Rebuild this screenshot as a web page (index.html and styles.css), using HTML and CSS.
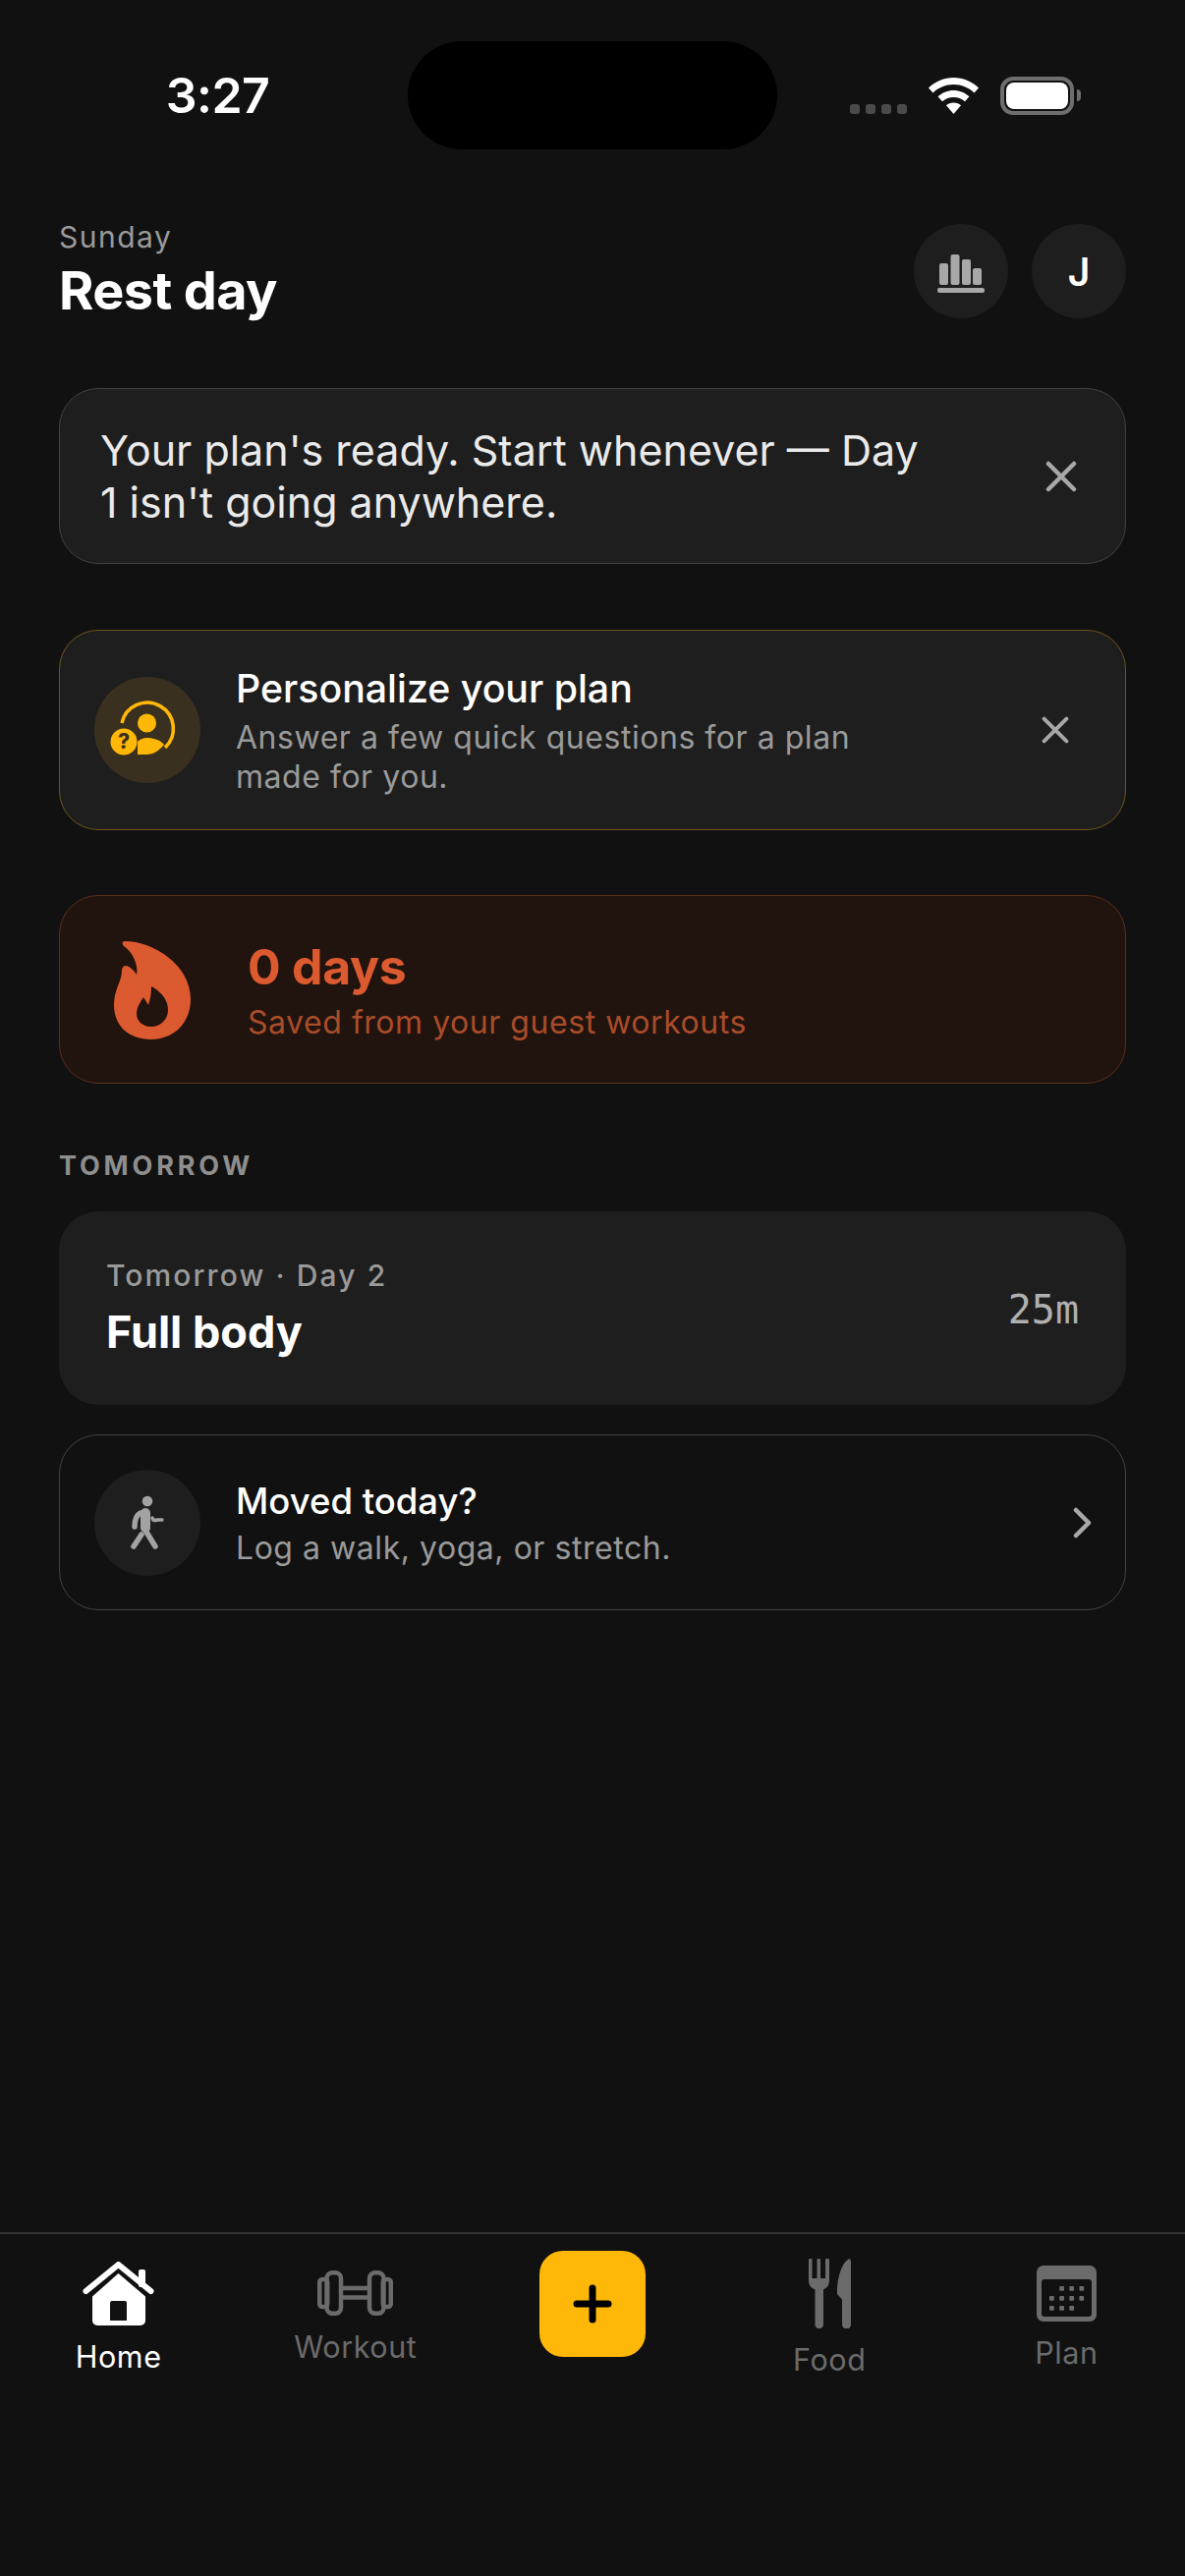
FILE: index.html
```html
<!DOCTYPE html>
<html lang="en">
<head>
<meta charset="utf-8">
<title>Home</title>
<link rel="stylesheet" href="styles.css">
</head>
<body>
<div class="screen">
  <div class="status">
    <div class="status-left"><span class="time">3:27</span></div>
    <div class="island"></div>
    <div class="status-right">
      <div class="signal"><i></i><i></i><i></i><i></i></div>
      <svg class="wifi" viewBox="0 0 51 37"><path d="M25.5 0C35 0 44 3.700 51 10.500L46.500 15.500C40.800 10 33.400 7 25.500 7C17.600 7 10.200 10 4.500 15.500L0 10.500C7 3.700 16 0 25.500 0Z"/><path d="M25.500 13C31.500 13 37.200 15.300 41.500 19.300L37 24.300C33.900 21.500 29.800 20 25.500 20C21.200 20 17.100 21.500 14 24.300L9.500 19.300C13.800 15.300 19.500 13 25.500 13Z"/><path d="M25.500 25.500C28.300 25.500 31 26.500 33 28.300L25.500 37L18 28.300C20 26.500 22.700 25.500 25.500 25.500Z"/></svg>
      <div class="battery"><div class="battery-fill"></div></div>
      <div class="battery-nub"></div>
    </div>
  </div>

  <main class="main">
    <header class="head">
      <div class="head-text">
        <div class="day">Sunday</div>
        <h1 class="title">Rest day</h1>
      </div>
      <div class="head-actions">
        <div class="round">
          <svg class="bars" viewBox="0 0 48 39"><rect x="2" y="9" width="9" height="22" rx="2"/><rect x="13.500" y="0" width="9" height="31" rx="2"/><rect x="25" y="5" width="9" height="26" rx="2"/><rect x="36" y="14" width="9" height="17" rx="2"/><rect x="0" y="34" width="48" height="5" rx="2"/></svg>
        </div>
        <div class="round round-j">J</div>
      </div>
    </header>

    <section class="card banner">
      <p class="banner-text">Your plan's ready. Start whenever — Day 1 isn't going anywhere.</p>
      <svg class="close close-a" viewBox="0 0 32 32"><path d="M3 3L29 29M29 3L3 29"/></svg>
    </section>

    <section class="card personal">
      <div class="disc disc-amber">
        <svg viewBox="0 0 108 108" class="disc-icon">
          <path class="p-arc" d="M28 47A26.500 26.500 0 1 1 72 72"/>
          <circle class="p-fill" cx="53.500" cy="47" r="9.500"/>
          <path class="p-fill" d="M44 79V66C47 63 50 62 53.500 62C60 62 67 64 71 69C66 75 60 79 53.500 79Z"/>
          <circle class="p-badge" cx="30" cy="66" r="13.500"/>
          <text class="p-q" x="30" y="73" text-anchor="middle">?</text>
        </svg>
      </div>
      <div class="text-col personal-text">
        <div class="row-title row-title-lg">Personalize your plan</div>
        <div class="row-sub">Answer a few quick questions for a plan made for you.</div>
      </div>
      <svg class="close close-b" viewBox="0 0 32 32"><path d="M3 3L29 29M29 3L3 29"/></svg>
    </section>

    <section class="card streak">
      <svg class="flame" viewBox="0 0 78 101"><path fill-rule="evenodd" d="M11 1C40 1 78 25 78 60C78 85 60 101 38 101C15 101 0 87 0 66C0 50 8 42 8 31C8 26 12 25 15 27C19 29 21 32 23 35C25 25 19 12 10 6C8 4 8 1 11 1ZM38 47C38 54 37 60 35 66L30 58C27 63 23 68 23 75C23 82 29 88 38 88C47 88 55 81 55 71C55 60 47 52 38 47Z"/></svg>
      <div class="streak-text">
        <div class="streak-num">0 days</div>
        <div class="streak-sub">Saved from your guest workouts</div>
      </div>
    </section>

    <div class="section-label">TOMORROW</div>

    <section class="next">
      <div class="next-text">
        <div class="next-over">Tomorrow · Day 2</div>
        <div class="next-title">Full body</div>
      </div>
      <div class="next-time">25m</div>
    </section>

    <section class="card moved">
      <div class="disc disc-grey">
        <svg viewBox="0 0 108 108" class="disc-icon walk">
          <circle cx="54" cy="32" r="5.300" class="w-fill"/>
          <path class="w-thick" d="M52 44V59"/>
          <path class="w-mid" d="M47 44C43 46 41 50 41 58"/>
          <path class="w-thin" d="M59 49L60 51Q61 52 64 51L69 51"/>
          <path class="w-mid" d="M51 60L62 78"/>
          <path class="w-mid" d="M48 66L40 78"/>
        </svg>
      </div>
      <div class="text-col moved-text">
        <div class="row-title row-title-sm">Moved today?</div>
        <div class="row-sub">Log a walk, yoga, or stretch.</div>
      </div>
      <svg class="chev" viewBox="0 0 20 32"><path d="M3 3L16 16L3 29"/></svg>
    </section>
  </main>

  <nav class="nav">
    <div class="tab tab-on">
      <svg class="ic-home" viewBox="0 0 73 65"><path class="home-roof" d="M3.500 30L36.500 3L69.500 30"/><rect x="57" y="8" width="7" height="18" rx="2" class="home-fill"/><path class="home-fill" fill-rule="evenodd" d="M36.500 12L64 35.500V60A5 5 0 0 1 59 65H15A5 5 0 0 1 10 60V35.500ZM30 40A2 2 0 0 0 28 42V60H45V42A2 2 0 0 0 43 40Z"/></svg>
      <span class="tab-label">Home</span>
    </div>
    <div class="tab">
      <svg class="ic-work" viewBox="0 0 77 46"><g class="work"><rect x="2.200" y="9" width="8" height="28" rx="3"/><rect x="9.500" y="2.200" width="14.500" height="41.600" rx="6"/><rect x="53" y="2.200" width="14.500" height="41.600" rx="6"/><rect x="66.800" y="9" width="8" height="28" rx="3"/><path d="M24 18H53M24 27.500H53"/></g></svg>
      <span class="tab-label">Workout</span>
    </div>
    <div class="tab-add"><svg class="plus" viewBox="0 0 40 40"><path d="M4 20H36M20 4V36"/></svg></div>
    <div class="tab">
      <svg class="ic-food" viewBox="0 0 43 71"><g class="solid"><path d="M0 1.500A1.500 1.500 0 0 1 3.500 1.500V20H8.500V1.500A1.750 1.750 0 0 1 12 1.500V20H17V1.500A2 2 0 0 1 21 1.500V22C21 27 18.500 30 15 31.500V67A4.250 4.250 0 0 1 6.500 67V31.500C2.500 30 0 27 0 22Z"/><path d="M43 3V67A4.500 4.500 0 0 1 34 67V41.500L29 36C28.500 22 33 5 40.500 0.500C42 0 43 1 43 3Z"/></g></svg>
      <span class="tab-label">Food</span>
    </div>
    <div class="tab">
      <svg class="ic-plan" viewBox="0 0 61 57"><path class="solid" fill-rule="evenodd" d="M7 0H54A7 7 0 0 1 61 7V50A7 7 0 0 1 54 57H7A7 7 0 0 1 0 50V7A7 7 0 0 1 7 0ZM8 14A3 3 0 0 0 5 17V49A3 3 0 0 0 8 52H53A3 3 0 0 0 56 49V17A3 3 0 0 0 53 14Z"/><g class="solid"><rect x="23.200" y="21" width="4.800" height="4.800" rx="1"/><rect x="33.300" y="21" width="4.800" height="4.800" rx="1"/><rect x="43.400" y="21" width="4.800" height="4.800" rx="1"/><rect x="13" y="31" width="4.800" height="4.800" rx="1"/><rect x="23.200" y="31" width="4.800" height="4.800" rx="1"/><rect x="33.300" y="31" width="4.800" height="4.800" rx="1"/><rect x="43.400" y="31" width="4.800" height="4.800" rx="1"/><rect x="13" y="41" width="4.800" height="4.800" rx="1"/><rect x="23.200" y="41" width="4.800" height="4.800" rx="1"/><rect x="33.300" y="41" width="4.800" height="4.800" rx="1"/></g></svg>
      <span class="tab-label">Plan</span>
    </div>
  </nav>
</div>
</body>
</html>
```

FILE: styles.css
```css
* { box-sizing: border-box; }
html, body { margin: 0; padding: 0; background: #111111; }
body { font-family: Inter, "Noto Sans", sans-serif; color: #fff; }
.screen { width: 1206px; height: 2622px; display: flex; flex-direction: column; overflow: hidden; }

.status { display: flex; padding-top: 42px; height: 228px; flex: none; }
.status-left { width: 415px; height: 110px; display: flex; align-items: center; justify-content: center; padding-left: 28px; }
.time { font-size: 50px; font-weight: 600; line-height: 1; letter-spacing: -0.6px; margin-top: 0; }
.island { width: 376px; height: 110px; background: #000; border-radius: 55px; flex: none; }
.status-right { flex: 1; display: flex; align-items: flex-start; padding: 36px 0 0 74px; }
.signal { display: flex; gap: 6px; margin-top: 28px; }
.signal i { width: 10px; height: 10px; border-radius: 3px; background: #4a4a4a; display: block; }
.wifi { width: 51px; height: 37px; fill: #fff; margin: 1px 0 0 22px; flex: none; }
.battery { width: 75px; height: 39px; border: 4px solid #6e6e6e; border-radius: 13px; padding: 2px; margin-left: 22px; flex: none; }
.battery-fill { width: 100%; height: 100%; background: #fff; border-radius: 8px; }
.battery-nub { width: 4px; height: 12px; margin: 13px 0 0 3px; background: #6e6e6e; border-radius: 0 4px 4px 0; }

.main { flex: 1; padding: 0 60px; display: flex; flex-direction: column; }
.head { display: flex; justify-content: space-between; align-items: flex-start; height: 96px; }
.head-text { margin-top: -5px; }
.day { font-size: 30px; line-height: 36px; letter-spacing: 1.5px; color: #9a9a9a; }
.title { margin: 6px 0 0; font-size: 54px; line-height: 62px; font-weight: 700; letter-spacing: -0.6px; }
.head-actions { display: flex; gap: 24px; }
.round { width: 96px; height: 96px; border-radius: 50%; background: #1e1e1e; display: flex; align-items: center; justify-content: center; }
.round-j { font-size: 39px; font-weight: 600; }
.bars { width: 48px; height: 39px; fill: #a8a8a8; margin-top: 4px; }

.card { border-radius: 40px; border: 1px solid #424242; display: flex; align-items: center; }
.banner { margin-top: 71px; height: 179px; background: #1e1e1e; padding: 0 49px 0 41px; justify-content: space-between; }
.banner-text { margin: 0; width: 840px; font-size: 43px; line-height: 53px; color: #eaeaea; }
.close { fill: none; stroke: #a8a8a8; stroke-width: 4.500px; stroke-linecap: round; flex: none; }
.close-a { width: 32px; height: 32px; }
.close-b { width: 28px; height: 28px; margin-left: auto; margin-right: 57px; }

.personal { margin-top: 67px; height: 204px; background: #1e1e1e; border-color: #6e5518; padding-left: 35px; }
.disc { width: 108px; height: 108px; border-radius: 50%; flex: none; }
.disc-icon { width: 108px; height: 108px; display: block; }
.disc-amber { background: #3a301f; }
.disc-grey { background: #1e1e1e; }
.p-arc { fill: none; stroke: #ffb808; stroke-width: 3.600px; }
.p-fill { fill: #ffb808; }
.p-badge { fill: #ffb808; }
.p-q { fill: #3a301f; font-size: 21px; font-weight: 800; font-family: Inter, sans-serif; }
.text-col { margin-left: 36px; }
.personal-text { width: 660px; padding-top: 3px; }
.moved-text { padding-top: 1px; }
.row-title { line-height: 46px; font-weight: 500; }
.row-title-lg { font-size: 39.300px; margin-top: -1px; }
.row-title-sm { font-size: 36.500px; }
.row-sub { font-size: 32px; line-height: 40px; color: #9a9a9a; letter-spacing: 0.54px; margin-top: 7px; }

.streak { margin-top: 66px; height: 192px; background: #21130e; border-color: #5c2e1c; padding-left: 55px; }
.flame { width: 78px; height: 101px; fill: #dc5a30; flex: none; }
.streak-text { margin-left: 58px; padding-top: 2px; }
.streak-num { font-size: 50px; line-height: 60px; font-weight: 700; letter-spacing: -0.3px; color: #dc5a30; }
.streak-sub { font-size: 32px; line-height: 42px; color: #a94c29; letter-spacing: 0.54px; margin-top: 6px; }

.section-label { margin-top: 68px; font-size: 27px; line-height: 32px; font-weight: 700; letter-spacing: 3.800px; color: #8e8e8e; }
.next { margin-top: 30px; height: 197px; border-radius: 40px; background: #1e1e1e; padding: 0 48px; display: flex; align-items: center; justify-content: space-between; }
.next-text { padding-bottom: 2px; }
.next-over { font-size: 30px; line-height: 38px; font-weight: 500; letter-spacing: 2.100px; color: #9a9a9a; }
.next-title { margin-top: 12px; font-size: 45px; line-height: 54px; font-weight: 700; }
.next-time { font-family: "DejaVu Sans Mono", monospace; font-size: 40px; color: #b0b0b0; margin-top: 2px; }

.moved { margin-top: 30px; height: 179px; padding: 0 33px 0 35px; background: #111; }
.moved .row-sub { margin-top: 5px; }
.walk { overflow: visible; }
.w-fill { fill: #a3a3a3; }
.w-thick, .w-mid, .w-thin { fill: none; stroke: #a3a3a3; stroke-linecap: round; stroke-linejoin: round; }
.w-thick { stroke-width: 10px; }
.w-mid { stroke-width: 5.500px; }
.w-thin { stroke-width: 3.500px; }
.chev { width: 20px; height: 32px; margin-left: auto; fill: none; stroke: #a8a8a8; stroke-width: 4.500px; stroke-linecap: round; stroke-linejoin: round; }

.nav { flex: none; height: 350px; border-top: 2px solid #333; display: flex; align-items: flex-start; }
.tab { flex: 1 1 0; height: 170px; display: flex; flex-direction: column; align-items: center; justify-content: center; gap: 14px; color: #6b6b6b; }
.tab-on { color: #fff; }
.tab-label { font-size: 30.500px; line-height: 36px; letter-spacing: 0.6px; font-weight: 400; }
.tab-add { flex: 1 1 0; display: flex; justify-content: center; padding-top: 51px; position: relative; }
.tab-add::before { content: ""; position: absolute; left: 67px; top: 17px; width: 108px; height: 108px; background: #ffb808; border-radius: 24px; }
.plus { position: relative; width: 40px; height: 40px; fill: none; stroke: #000; stroke-width: 7px; stroke-linecap: round; }
.ic-home { width: 73px; height: 65px; }
.home-roof { fill: none; stroke: #fff; stroke-width: 6px; stroke-linecap: round; stroke-linejoin: round; }
.home-fill { fill: #fff; }
.ic-work { width: 77px; height: 46px; }
.work { fill: none; stroke: #6b6b6b; stroke-width: 4.500px; }
.ic-food { width: 43px; height: 71px; }
.ic-plan { width: 61px; height: 57px; }
.solid { fill: #6b6b6b; }
```
